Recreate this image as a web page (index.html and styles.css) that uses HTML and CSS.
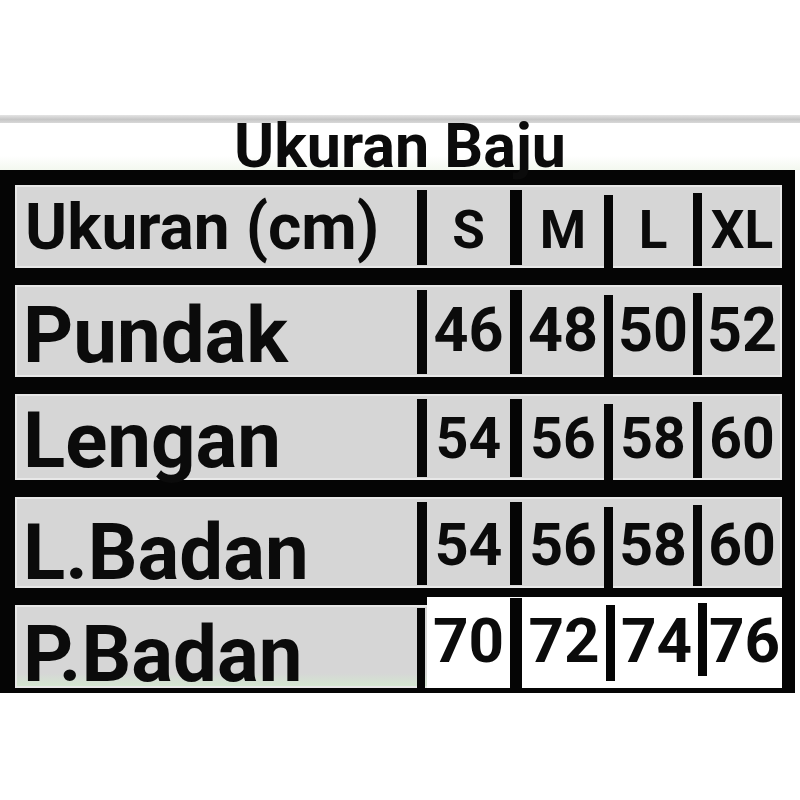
FILE: index.html
```html
<!DOCTYPE html>
<html lang="id">
<head>
<meta charset="utf-8">
<title>Ukuran Baju</title>
<link rel="stylesheet" href="styles.css">
</head>
<body>
<div class="page">
  <div class="rule"></div>
  <h1 class="title">Ukuran Baju</h1>
  <div class="chart">
    <div class="row row-head">
      <div class="label">Ukuran (cm)</div>
      <div class="bar"></div><div class="cell c1">S</div>
      <div class="bar b2"></div><div class="cell c2">M</div>
      <div class="bar b3"></div><div class="cell c3">L</div>
      <div class="bar b4"></div><div class="cell c4">XL</div>
    </div>
    <div class="row row-pundak">
      <div class="label">Pundak</div>
      <div class="bar"></div><div class="cell c1">46</div>
      <div class="bar b2"></div><div class="cell c2">48</div>
      <div class="bar b3"></div><div class="cell c3">50</div>
      <div class="bar b4"></div><div class="cell c4">52</div>
    </div>
    <div class="row row-lengan">
      <div class="label">Lengan</div>
      <div class="bar"></div><div class="cell c1">54</div>
      <div class="bar b2"></div><div class="cell c2">56</div>
      <div class="bar b3"></div><div class="cell c3">58</div>
      <div class="bar b4"></div><div class="cell c4">60</div>
    </div>
    <div class="row row-lbadan">
      <div class="label">L.Badan</div>
      <div class="bar"></div><div class="cell c1">54</div>
      <div class="bar b2"></div><div class="cell c2">56</div>
      <div class="bar b3"></div><div class="cell c3">58</div>
      <div class="bar b4"></div><div class="cell c4">60</div>
    </div>
    <div class="row row-pbadan">
      <div class="label">P.Badan</div>
      <div class="bar"></div>
      <div class="values">
        <div class="cell p1">70</div>
        <div class="bar pb2"></div><div class="cell p2">72</div>
        <div class="bar pb3"></div><div class="cell p3">74</div>
        <div class="bar pb4"></div><div class="cell p4">76</div>
      </div>
    </div>
  </div>
</div>
</body>
</html>
```

FILE: styles.css
```css
html, body {
  margin: 0;
  padding: 0;
  background: #ffffff;
}

.page {
  width: 800px;
  padding-top: 115px;
  font-family: Roboto, "Liberation Sans", Arial, sans-serif;
  font-weight: 700;
  color: #0b0b0b;
}

.rule {
  height: 8px;
  background: linear-gradient(to bottom, #e4e4e4 0%, #c6c6c6 55%, #d8d8d8 100%);
}

.title {
  margin: 0;
  height: 47px;
  font-size: 61px;
  line-height: 46px;
  font-weight: 700;
  text-align: center;
  background: linear-gradient(to bottom, #ffffff 70%, #f3f8ef 100%);
}

.chart {
  width: 795px;
  box-sizing: border-box;
  background: #050505;
  padding: 15px 13px 5px 15px;
  display: flex;
  flex-direction: column;
  gap: 17px;
}

.row {
  --h: 83px;
  --label-fs: 78px;
  --label-top: 12px;
  --val-fs: 60px;
  --val-top: 16px;
  display: flex;
  height: var(--h);
  background: #d6d6d6;
  box-shadow: inset 0 0 0 2px #e8e8e8;
  line-height: 1;
}

.row-head   { --h: 83px; --label-fs: 64px; --label-top: 11px; --val-fs: 53px; --val-top: 19px; }
.row-pundak { --h: 92px; --label-fs: 78px; --label-top: 12px; --val-fs: 61px; --val-top: 15px; }
.row-lengan { --h: 86px; --label-fs: 78px; --label-top: 8px;  --val-fs: 57px; --val-top: 16px; }
.row-lbadan { --h: 91px; --label-fs: 78px; --label-top: 17px; --val-fs: 59px; --val-top: 18px; }
.row-pbadan { --h: 83px; --label-fs: 78px; --label-top: 11px; --val-fs: 62px; --val-top: 13px;
  background: linear-gradient(to bottom, #d6d6d6 0%, #d6d6d6 82%, #d3e9cf 100%);
}

.label {
  width: 402px;
  flex: none;
  box-sizing: border-box;
  padding: var(--label-top) 0 0 8px;
  font-size: var(--label-fs);
  white-space: nowrap;
}
.row-head .label { padding-left: 10px; }

.bar {
  flex: none;
  width: 10px;
  margin: 5px 0 3px;
  background: #050505;
}
.b2 { width: 12px; }
.b3 { width: 9px; margin: 10px 0 0; }
.b4 { width: 9px; margin: 8px 0 2px; }

.cell {
  flex: none;
  box-sizing: border-box;
  padding-top: var(--val-top);
  font-size: var(--val-fs);
  text-align: center;
  white-space: nowrap;
}
.c1 { width: 83px; }
.c2 { width: 82px; }
.c3 { width: 80px; }
.c4 { width: 80px; }

.row-pbadan .bar { margin: 3px 2px 0 0; width: 8px; }

.values {
  flex: none;
  width: 355px;
  margin-top: -8px;
  display: flex;
  background: #ffffff;
}
.values .bar { margin: 0; }
.values .pb2 { width: 12px; margin: 1px 0 0; }
.values .pb3 { width: 9px; margin: 8px 0 7px; }
.values .pb4 { width: 9px; margin: 6px 0 12px; }
.p1 { width: 83px; }
.p2 { width: 84px; }
.p3 { width: 83px; }
.p4 { width: 75px; }
```
